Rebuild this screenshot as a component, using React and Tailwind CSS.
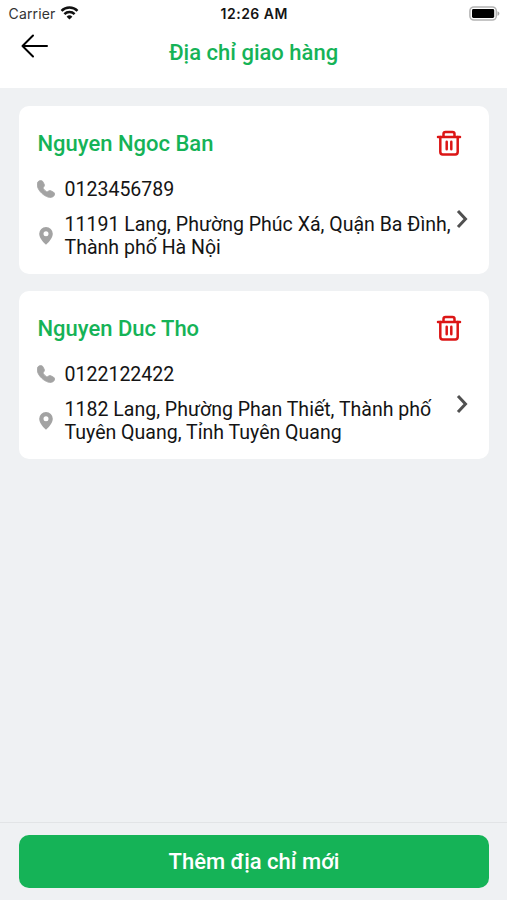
// Shipping address list screen

import React from 'react';

const addresses = [
  {
    id: 1,
    name: 'Nguyen Ngoc Ban',
    phone: '0123456789',
    address: '11191 Lang, Phường Phúc Xá, Quận Ba Đình, Thành phố Hà Nội',
  },
  {
    id: 2,
    name: 'Nguyen Duc Tho',
    phone: '0122122422',
    address: '1182 Lang, Phường Phan Thiết, Thành phố Tuyên Quang, Tỉnh Tuyên Quang',
  },
];

function WifiIcon() {
  return (
    <svg className="mb-0.5" width="19" height="14" viewBox="0 0 18 14" fill="none" stroke="#111" strokeWidth="2.5">
      <path d="M1 4.9a11.4 11.4 0 0 1 16 0" />
      <path d="M3.9 8.2a7.2 7.2 0 0 1 10.2 0" />
      <path d="M9 13.6 6.1 10.7a4.1 4.1 0 0 1 5.8 0Z" fill="#111" stroke="none" />
    </svg>
  );
}

function BatteryIcon() {
  return (
    <svg className="mb-0.5" width="31" height="15" viewBox="0 0 31 15">
      <rect x="0.9" y="0.9" width="26.4" height="13.2" rx="4" fill="#fff" stroke="#b3b3b3" strokeWidth="1.5" />
      <rect x="3" y="3" width="22.2" height="9" rx="1.4" fill="#000" />
      <path d="M28.5 5.2c1.2.4 1.9 1.3 1.9 2.3s-.7 1.9-1.9 2.3Z" fill="#a6a6a6" />
    </svg>
  );
}

function TrashIcon() {
  return (
    <svg className="mb-0.5" width="26" height="26" viewBox="0 0 26 26" fill="none" stroke="#dc1616" strokeWidth="2.5" strokeLinecap="round" strokeLinejoin="round">
      <path d="M2 7h22" />
      <path d="M7.5 6.5V4a2 2 0 0 1 2-2h7a2 2 0 0 1 2 2v2.5" />
      <path d="M4.3 7v15a2.4 2.4 0 0 0 2.4 2.4h12.6a2.4 2.4 0 0 0 2.4-2.4V7" />
      <path d="M10.7 11.8v7.4M15.3 11.8v7.4" />
    </svg>
  );
}

function PhoneIcon() {
  return (
    <svg className="mb-0.5 -ml-px" width="18" height="18" viewBox="0 0 18 18" fill="#a3a3a3" stroke="#a3a3a3" strokeWidth="0.8">
      <path d="M1.2 1.6C2.4.3 4.9.2 5.8 1.5l1.4 2.7c.5 1 .3 1.9-.5 2.7-.7.7-.6 1.3-.1 2 .8 1.1 1.5 1.8 2.6 2.5.7.5 1.3.5 2-.1.8-.8 1.700-1 2.700-.5l2.700 1.400c1.300.8 1.300 2.500.2 3.800-1.300 1.500-3.500 1.800-5.800 1.100C6.500 15.600 2 11.500.5 6.800-.1 4.700.1 2.800 1.200 1.600Z" />
    </svg>
  );
}

function PinIcon() {
  return (
    <svg width="14" height="18" viewBox="0 0 14 18" fill="#a3a3a3">
      <path fillRule="evenodd" d="M7 0a6.8 6.8 0 0 0-6.8 6.8C.2 11 4.6 15.6 7 17.8c2.4-2.2 6.8-6.8 6.8-11A6.8 6.8 0 0 0 7 0Zm0 4.3a2.5 2.5 0 1 1 0 5 2.5 2.5 0 0 1 0-5Z" />
    </svg>
  );
}

function AddressCard({ item }) {
  return (
    <div className="flex h-[168px] flex-col rounded-[10px] bg-white px-[18.5px] pt-[25px]">
      <div className="flex h-[26px] items-center justify-between pr-[9px]">
        <h2 className="text-[22px] font-medium leading-[26px] text-[#15b357]">{item.name}</h2>
        <TrashIcon />
      </div>
      <div className="mt-[21px] flex h-[23px] items-center">
        <span className="w-[27px] shrink-0">
          <PhoneIcon />
        </span>
        <span>{item.phone}</span>
      </div>
      <div className="mt-3 flex h-[46px] items-center">
        <span className="w-[27px] shrink-0 pl-[1.5px]">
          <PinIcon />
        </span>
        <p className="w-[391px] shrink-0">{item.address}</p>
        <svg className="mb-[34px] shrink-0" width="12" height="20" viewBox="0 0 12 20" fill="none" stroke="#505050" strokeWidth="3">
          <path d="m2 2 7.5 8L2 18" />
        </svg>
      </div>
    </div>
  );
}

export default function App() {
  return (
    <div className="flex h-[900px] w-[507px] flex-col bg-[#eff1f3] font-[Roboto,sans-serif] text-[19.54px] leading-[23px] text-[#141414]">
      {/* Header */}
      <header className="h-[88px] bg-white">
        <div className="grid h-7 grid-cols-3 items-center pl-[8.5px] pr-[7px] font-[Inter,sans-serif] text-[14px] leading-7">
          <div className="flex items-center gap-[5px] text-[#333]">
            <span className="tracking-[0.15px]">Carrier</span>
            <WifiIcon />
          </div>
          <span className="text-center font-semibold tracking-[0.5px]">12:26 AM</span>
          <div className="flex justify-end">
            <BatteryIcon />
          </div>
        </div>
        <div className="grid h-12 grid-cols-[60px_1fr_60px] items-center">
          <svg className="mb-3 ml-5" width="28" height="24" viewBox="0 0 28 24" fill="none" stroke="#000" strokeWidth="2" strokeLinecap="round" strokeLinejoin="round">
            <path d="M13 1.5 2.5 12 13 22.5M2.5 12H27" />
          </svg>
          <h1 className="text-center text-[22px] font-medium text-[#15b357]">Địa chỉ giao hàng</h1>
        </div>
      </header>

      {/* Address list */}
      <main className="flex flex-1 flex-col gap-[17px] pl-[19px] pr-[18px] pt-[18px]">
        {addresses.map((item) => (
          <AddressCard key={item.id} item={item} />
        ))}
      </main>

      {/* Add button */}
      <footer className="h-[78px] border-t border-[#e2e4e6] pl-[19px] pr-[18px] pt-3">
        <button className="h-[53px] w-full rounded-[10px] bg-[#15b357] text-[22px] font-medium text-white">
          Thêm địa chỉ mới
        </button>
      </footer>
    </div>
  );
}
